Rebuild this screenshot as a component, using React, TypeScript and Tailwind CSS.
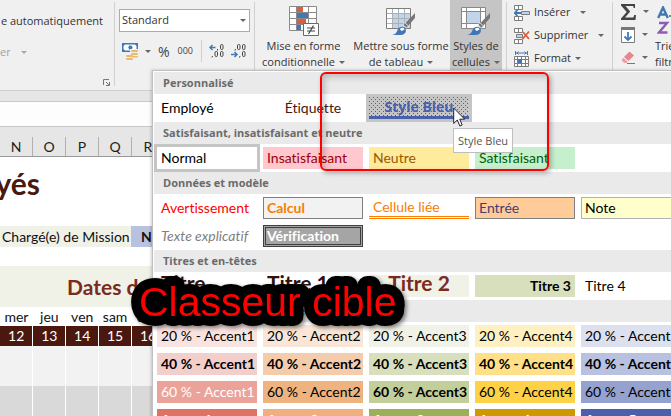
import type { ReactNode } from "react";

const ui = "font-['Open_Sans','Noto_Sans',sans-serif]";
const calibri = "font-['Lato','Open_Sans',sans-serif] [font-variant-ligatures:none]";

function Caret({ className = "text-[#666]" }: { className?: string }) {
  return (
    <svg className={`inline-block shrink-0 ${className}`} width="6" height="3" viewBox="0 0 6 3" aria-hidden="true">
      <path d="M0 0h6L3 3z" fill="currentColor" />
    </svg>
  );
}

function Divider({ className = "h-[84px]" }: { className?: string }) {
  return <div className={`w-px shrink-0 bg-[#d0d0d0] ${className}`} />;
}

function MoneyIcon() {
  return (
    <svg width="17" height="17" viewBox="0 0 17 17" aria-hidden="true">
      <path d="M0 0h16v9H0z" fill="#3f78b5" />
      <path d="M3 1.5h10L14.500 3v3L13 7.500H3L1.500 6V3z" fill="#fff" />
      <path d="M8 2a3 3 0 0 0 0 5z" fill="#3f78b5" />
      <circle cx="8.500" cy="4.500" r="2" fill="#3f78b5" />
      <path d="M8 6h9v9h-5v2H3v-6h5z" fill="#f0f0f0" />
      <g fill="#e8b96f">
        <rect x="9" y="7" width="7" height="2" rx="1" />
        <rect x="9" y="10" width="7" height="2" rx="1" />
        <rect x="10" y="13" width="6" height="1.500" rx=".7" />
        <rect x="4" y="12" width="7" height="2" rx="1" />
        <rect x="4" y="15" width="7" height="2" rx="1" />
      </g>
    </svg>
  );
}

function DecimalIcon({ more }: { more?: boolean }) {
  const arrow = more ? "M6.500 3.500H1M3.500 1L1 3.500 3.500 6" : "M0 10.500h6M3.500 8L6 10.500 3.500 13";
  return (
    <svg width="15" height="14" viewBox="0 0 15 14" aria-hidden="true" fill="none">
      <path d={arrow} stroke="#3f78b5" strokeWidth="1.500" />
      <g stroke="#444">
        <rect x="11.500" y=".5" width="2.500" height="5" rx="1.200" />
        <path d={more ? "M8.500 5v1.500" : "M4.500 5L4 6.500"} />
        {more ? (
          <>
            <rect x="6" y="7.500" width="2.500" height="5" rx="1.200" />
            <path d="M3.500 12L3 13.500" />
          </>
        ) : (
          <>
            <rect x="6.500" y=".5" width="2.500" height="5" rx="1.200" />
            <path d="M9 12l-.5 1.500" />
          </>
        )}
        <rect x="11.500" y="7.500" width="2.500" height="5" rx="1.200" />
      </g>
    </svg>
  );
}

function ConditionalIcon() {
  return (
    <svg width="30" height="31" viewBox="0 0 30 31" aria-hidden="true">
      <path d="M.5 1.500h27v24H.5z" fill="#fff" />
      <path d="M.5 1.500h27v24H.5zM.5 7.500h27M.5 13.500h27M.5 19.500h27M7.500 1.500v24M19.500 1.500v24" fill="none" stroke="#8a8a8a" />
      <path d="M8 2h6v5H8zM8 14h9v5H8z" fill="#d9603b" />
      <path d="M8 8h11v5H8zM8 20h4v5H8z" fill="#3f78b5" />
      <path d="M14.500 18.500h15v12h-15z" fill="#fff" stroke="#6a6a6a" />
      <path d="M18 23h8M18 26h8M24.500 20.500l-5 8.500" stroke="#444" strokeWidth="1.200" fill="none" />
    </svg>
  );
}

function Brush() {
  return (
    <>
      <path d="M29 6v5l-7 8-3-2.500z" fill="#777" />
      <path d="M18.500 15.500l4 3.500-2 2-3.500-3z" fill="#777" stroke="#f0f0f0" strokeWidth=".8" />
      <path d="M6 28c3-.5 4.500-2 5.500-5 1.500-3.500 6-4.500 8-1.500 1.500 3-1 6.500-4.500 6.500z" fill="#3f78b5" />
      <path d="M14 22c1.500-2 4-1.500 4.500.5-1 1-2 .3-2.500 1.500-1-.2-1.700-.8-2-2z" fill="#fff" />
    </>
  );
}

function TableIcon() {
  return (
    <svg width="30" height="29" viewBox="0 0 30 29" aria-hidden="true">
      <path d="M.5 1.500h24v20H.5z" fill="#fff" />
      <path d="M7 7h18v15H7z" fill="#c1d4e9" />
      <path d="M.5 6.500h24M.5 11.500h24M.5 16.500h24M6.500 1.500v20M12.500 1.500v20M18.500 1.500v20" fill="none" stroke="#a9b0b8" />
      <path d="M.5 1.500h24v20H.5z" fill="none" stroke="#7d7d7d" />
      <Brush />
    </svg>
  );
}

function StylesIcon() {
  return (
    <svg width="30" height="29" viewBox="0 0 30 29" aria-hidden="true">
      <path d="M.5.5h24v21H.5z" fill="#fff" />
      <path d="M6 5h14v11H6z" fill="#c1d4e9" />
      <path d="M.5.5h24v21H.5zM.5 4.500h24M.5 16.500h24M5.500.5v21M19.500.5v21" fill="none" stroke="#888" />
      <Brush />
    </svg>
  );
}

function InsertIcon() {
  return (
    <svg width="16" height="16" viewBox="0 0 16 16" aria-hidden="true" fill="#fff">
      <path d="M.5.5h8v4h-8zM4.500.5v4M.5 11.500h8v4h-8zM4.500 11.500v4" stroke="#7d7d7d" />
      <path d="M7.500 6.500h8v3h-8z" fill="#c1d4e9" stroke="#7d7d7d" />
      <path d="M7 8H1M3.500 5L.7 8l2.800 3" fill="none" stroke="#3f78b5" strokeWidth="1.800" />
    </svg>
  );
}

function DeleteIcon() {
  return (
    <svg width="16" height="16" viewBox="0 0 16 16" aria-hidden="true" fill="#fff">
      <path d="M.5.5h8v4h-8zM4.500.5v4M.5 11.500h8v4h-8zM4.500 11.500v4" stroke="#7d7d7d" />
      <path d="M2.500 6.500h6v3h-6z" fill="#c1d4e9" stroke="#7d7d7d" />
      <path d="M9 4l6 7M15 3.500L8.500 11" fill="none" stroke="#d9603b" strokeWidth="1.800" />
    </svg>
  );
}

function FormatIcon() {
  return (
    <svg width="16" height="16" viewBox="0 0 16 16" aria-hidden="true" fill="none">
      <path d="M1.500 0v4M13.500 0v4M2 2h11M4.500.5L3 2l1.500 1.500M10.500.5L12 2l-1.500 1.500" stroke="#3f78b5" />
      <path d="M.5 5.500h14v10H.5z" fill="#fff" />
      <path d="M.5 5.500h14v10H.5zM.5 8.500h14M.5 12.500h14M3.500 5.500v10M7.500 5.500v10M11.500 5.500v10" stroke="#7d7d7d" />
      <path d="M4 8h4v4H4z" fill="#3f78b5" />
    </svg>
  );
}

function SigmaIcon() {
  return (
    <svg width="15" height="16" viewBox="0 0 15 16" aria-hidden="true">
      <path d="M0 0h14v4h-1.200l-.8-2H4.500l4.700 5.500L4 13.500h8.300l1-2.500H15l-.5 5H0v-1.500L5.700 8 0 1.500z" fill="#444" />
    </svg>
  );
}

function FillIcon() {
  return (
    <svg width="15" height="16" viewBox="0 0 15 16" aria-hidden="true" fill="none">
      <path d="M.5.5h13v15H.5z" fill="#fff" stroke="#7d7d7d" />
      <path d="M0 0h14v3H0z" fill="#777" />
      <path d="M7 5v8M3.500 9.500L7 13l3.500-3.500" stroke="#3f78b5" strokeWidth="1.800" />
    </svg>
  );
}

function EraserIcon() {
  return (
    <svg width="15" height="13" viewBox="0 0 15 13" aria-hidden="true">
      <path d="M8.500.5L13 4.500 7.500 10 3 6z" fill="#e8868f" />
      <path d="M2.300 6.700L6.800 10.700 5.500 12H3L.5 9z" fill="#ec9fa7" />
      <path d="M6 12.500h8" stroke="#777" />
    </svg>
  );
}

function SortIcon() {
  return (
    <svg width="30" height="30" viewBox="0 0 30 30" aria-hidden="true" fill="none" strokeWidth="2.400">
      <path d="M1.200 12L6 1.500 10.800 12M3 8.500h6" stroke="#3f78b5" />
      <path d="M2 17h8l-8 9.500h8.500" stroke="#8d5db5" />
      <path d="M12 10h4" stroke="#666" strokeWidth="1.500" />
    </svg>
  );
}

function BigButton({ icon, first, second, className }: { icon: ReactNode; first: string; second: string; className: string }) {
  return (
    <button type="button" className={`flex h-[71px] shrink-0 flex-col items-center whitespace-nowrap text-[11px] leading-4 text-[#333] ${className}`}>
      <span className="flex h-9 shrink-0 items-end">{icon}</span>
      <span className="mt-0.5">{first}</span>
      <span className="flex items-center gap-1">
        {second}
        <Caret />
      </span>
    </button>
  );
}

function SmallButton({ icon, label, gap = "gap-2.5" }: { icon: ReactNode; label: string; gap?: string }) {
  return (
    <button type="button" className="flex h-[23px] items-center gap-1 text-[11px] text-[#333]">
      {icon}
      <span className={`flex items-center ${gap}`}>
        {label}
        <Caret />
      </span>
    </button>
  );
}

function Ribbon() {
  return (
    <div className={`flex h-[91px] overflow-hidden border-b border-[#d0d0d0] bg-[#f0f0f0] ${ui}`}>
      <div className="flex w-[114px] shrink-0 flex-col items-end pr-1 pt-3 text-[11px]">
        <button type="button" className="mr-[7px] whitespace-nowrap leading-[18px] text-[#333]">e automatiquement</button>
        <button type="button" className="mt-[13px] flex items-center gap-2.5 self-start leading-[18px] text-[#a0a0a0]">
          er <Caret className="text-[#a8a8a8]" />
        </button>
        <button type="button" aria-label="Alignement" className="mt-[18px]">
          <svg width="7" height="7" viewBox="0 0 7 7" aria-hidden="true" fill="none" stroke="#777">
            <path d="M.5 6V.5H6M3 3l3 3M6.500 3v3.500H3" />
          </svg>
        </button>
      </div>
      <Divider className="mt-0.5 h-[84px]" />
      <div className="w-[139px] shrink-0 pl-1 pt-[9px]">
        <div className="grid w-[131px] grid-cols-1 items-center">
          <select aria-label="Format de nombre" className="col-start-1 row-start-1 h-[23px] appearance-none border border-[#ababab] bg-white pl-0.5 text-[11px] text-[#333]">
            <option>Standard</option>
          </select>
          <span className="pointer-events-none col-start-1 row-start-1 mr-1 flex justify-end"><Caret /></span>
        </div>
        <div className="flex h-[38px] items-center pl-[3px] text-[#444]">
          <button type="button" aria-label="Comptabilité" className="flex items-center gap-1.5"><MoneyIcon /><Caret /></button>
          <button type="button" className="ml-[7px] text-[14px]">%</button>
          <button type="button" className="ml-2 text-[9px]">000</button>
          <div className="ml-2 h-[22px] w-px bg-[#d0d0d0]" />
          <button type="button" aria-label="Ajouter une décimale" className="ml-[7px]"><DecimalIcon more /></button>
          <button type="button" aria-label="Réduire les décimales" className="ml-[7px]"><DecimalIcon /></button>
        </div>
      </div>
      <Divider className="mt-0.5 h-[84px]" />
      <BigButton className="w-[97px]" icon={<ConditionalIcon />} first="Mise en forme" second="conditionnelle" />
      <BigButton className="w-[98px]" icon={<TableIcon />} first="Mettre sous forme" second="de tableau" />
      <BigButton className="w-[52px] bg-[#c5c5c5]" icon={<StylesIcon />} first="Styles de" second="cellules" />
      <Divider className="ml-1 mt-0.5 h-[84px]" />
      <div className="w-[105px] shrink-0 pl-[7px] pt-px">
        <SmallButton icon={<InsertIcon />} label="Insérer" />
        <SmallButton icon={<DeleteIcon />} label="Supprimer" />
        <SmallButton icon={<FormatIcon />} label="Format" gap="gap-1" />
      </div>
      <Divider className="mt-0.5 h-[84px]" />
      <div className="flex w-[42px] shrink-0 flex-col pl-2">
        <button type="button" aria-label="Somme" className="flex h-[23px] items-center gap-[7px]"><SigmaIcon /><Caret /></button>
        <button type="button" aria-label="Remplissage" className="flex h-[23px] items-center gap-[6px]"><FillIcon /><Caret /></button>
        <button type="button" aria-label="Effacer" className="flex h-[23px] items-center gap-[6px]"><EraserIcon /><Caret /></button>
      </div>
      <button type="button" className="flex h-[71px] shrink-0 flex-col items-start whitespace-nowrap text-[11px] leading-4 text-[#333]">
        <span className="ml-0.5 flex h-9 items-end"><SortIcon /></span>
        <span className="mt-0.5">Trier et</span>
        <span>filtrer</span>
      </button>
    </div>
  );
}

const columns = ["N", "O", "P", "Q", "R"];
const days = [
  ["mer", "12"],
  ["jeu", "13"],
  ["ven", "14"],
  ["sam", "15"],
  ["dim", "16"],
];

function Sheet() {
  return (
    <div className={`overflow-hidden ${calibri}`}>
      <div className="h-2.5 bg-[#e6e6e6]" />
      <div className="h-[26px] border-y border-[#c8c8c8] bg-[#fdfdfd]" />
      <div className="flex h-[30px] items-end border-b border-[#999] bg-[#e6e6e6] text-[14px] text-[#222]">
        {columns.map((c) => (
          <div key={c} className="h-[19px] w-[33px] border-r border-[#b0b0b0] text-center leading-[20px]">{c}</div>
        ))}
      </div>
      <div className="flex h-[69px] w-10 justify-end pt-2 text-[30px] font-bold leading-9 text-[#4a180f]">yés</div>
      <div className="flex h-[21px] whitespace-nowrap text-[14px] leading-[21px] text-[#111]">
        <div className="w-[131px] shrink-0 bg-[#f0f2e7] pl-0.5">Chargé(e) de Mission</div>
        <div className="grow bg-[#b8c1df] pl-2.5 font-bold">N.</div>
      </div>
      <div className="mt-[19px] h-[41px] bg-[#f0f2e7] pl-[67px] text-[21px] font-bold leading-[41px] text-[#7b2a20]">Dates du</div>
      <table className="w-[165px] table-fixed border-collapse text-center text-[14px]">
        <thead>
          <tr className="h-[19px] leading-[19px] text-[#111]">
            {days.map(([d]) => <th key={d} className="p-0 font-normal">{d}</th>)}
          </tr>
        </thead>
        <tbody>
          <tr className="h-5 bg-[#4a180f] leading-5 text-white">
            {days.map(([d, n]) => <td key={d} className="border-r border-white p-0">{n}</td>)}
          </tr>
          <tr className="h-10 bg-[#f2f2f2]">
            {days.map(([d]) => <td key={d} className="border-r border-white p-0" />)}
          </tr>
          <tr className="h-10 bg-[#d9d9d9]">
            {days.map(([d]) => <td key={d} className="border-r border-white p-0" />)}
          </tr>
        </tbody>
      </table>
    </div>
  );
}

function Heading({ children }: { children: ReactNode }) {
  return <h2 className={`h-[22px] bg-[#eaeaea] pl-[9px] text-[11px] font-bold leading-[22px] text-[#6a6a6a] ${ui}`}>{children}</h2>;
}

function Row({ children }: { children: ReactNode }) {
  return <div className="flex h-7">{children}</div>;
}

function Style({ children, className = "", frame = "", pad = "px-1", size = "text-[14px] leading-[20px]" }: { children: ReactNode; className?: string; frame?: string; pad?: string; size?: string }) {
  return (
    <button type="button" className={`h-7 w-[106px] shrink-0 p-[3px] ${frame}`}>
      <span className={`relative flex h-[22px] items-center overflow-hidden whitespace-nowrap ${pad} ${size} ${className}`}>{children}</span>
    </button>
  );
}

function Title({ children }: { children: ReactNode }) {
  return <span className="self-start text-[21px] leading-4">{children}</span>;
}

const accents = [
  { label: "20 % - Accent", cells: ["bg-[#f9e3e1]", "bg-[#fae6d7]", "bg-[#f0f2e7]", "bg-[#fff0c2]", "bg-[#dce0ef]"] },
  { label: "40 % - Accent", cells: ["bg-[#f3cfcb] font-bold", "bg-[#f4ccac] font-bold", "bg-[#d7dfbc] font-bold", "bg-[#ffe088] font-bold", "bg-[#b8c1df] font-bold"] },
  { label: "60 % - Accent", cells: ["bg-[#eaa299] text-white", "bg-[#efb380]", "bg-[#c3cf9b] font-bold", "bg-[#ffd147]", "bg-[#95a2cf]"] },
  { label: "Accent", cells: ["bg-[#de7265] font-bold text-white", "bg-[#efb080] font-bold text-white", "bg-[#9bb05b] font-bold text-white", "bg-[#cc9900] font-bold text-white", "bg-[#4b60ab] font-bold text-white"] },
];

function Gallery() {
  return (
    <div className={`absolute left-[152px] right-0 top-[70px] overflow-hidden border-l border-t border-[#c0c0c0] bg-white pl-px pt-px text-black shadow-[-1px_0_3px_rgba(0,0,0,0.2)] ${calibri}`}>
      <Heading>Personnalisé</Heading>
      <Row>
        <Style>Employé</Style>
        <Style className="justify-center text-[#4a180f]">Étiquette</Style>
        <Style frame="bg-[#c5c5c5]" size="text-[14px] leading-[18px]" className={`justify-center border-b-[3px] border-[#4b60ab] font-bold text-[#4b60ab] ${ui}`}>
          <svg className="absolute inset-0" width="100" height="19" aria-hidden="true">
            <pattern id="dots" width="4" height="4" patternUnits="userSpaceOnUse">
              <path d="M0 0h1v1H0zM2 2h1v1H2z" fill="#4b60ab" />
            </pattern>
            <rect width="100" height="19" fill="url(#dots)" />
          </svg>
          <span className="relative">Style Bleu</span>
        </Style>
      </Row>
      <Heading>Satisfaisant, insatisfaisant et neutre</Heading>
      <Row>
        <Style frame="outline-[3px] -outline-offset-[3px] outline-[#c5c5c5] outline-solid">Normal</Style>
        <Style className="bg-[#ffc7ce] text-[#9c0006]">Insatisfaisant</Style>
        <Style className="bg-[#ffeb9c] text-[#9c5700]">Neutre</Style>
        <Style className="bg-[#c6efce] text-[#006100]">Satisfaisant</Style>
      </Row>
      <Heading>Données et modèle</Heading>
      <Row>
        <Style className="text-[#ff0000]">Avertissement</Style>
        <Style pad="px-[3px]" className="border border-[#7f7f7f] bg-[#f2f2f2] font-bold text-[#fa7d00]">Calcul</Style>
        <Style className="border-b-[3px] border-double border-[#ff8001] text-[#fa7d00]">Cellule liée</Style>
        <Style pad="px-[3px]" className="border border-[#7f7f7f] bg-[#ffcc99] text-[#3f3f76]">Entrée</Style>
        <Style pad="px-[3px]" className="border border-[#b2b2b2] bg-[#ffffcc]">Note</Style>
      </Row>
      <Row>
        <Style className="italic text-[#7f7f7f]">Texte explicatif</Style>
        <Style pad="px-px" className="border-[3px] border-double border-[#3f3f3f] bg-[#a5a5a5] font-bold text-white">Vérification</Style>
      </Row>
      <Heading>Titres et en-têtes</Heading>
      <Row>
        <Style className="font-bold text-[#330f0a]"><Title>Titre</Title></Style>
        <Style className="font-bold text-[#330f0a]"><Title>Titre 1</Title></Style>
        <Style className="justify-center bg-[#f0f2e7] font-bold text-[#7b2a20]"><Title>Titre 2</Title></Style>
        <Style className="justify-end bg-[#d7dfbc] font-bold">Titre 3</Style>
        <Style>Titre 4</Style>
      </Row>
      <Heading>Styles de cellules avec thème</Heading>
      {accents.map(({ label, cells }) => (
        <Row key={label}>
          {cells.map((cell, i) => (
            <Style key={cell} className={cell}>{`${label}${i + 1}`}</Style>
          ))}
        </Row>
      ))}
    </div>
  );
}

export default function App() {
  return (
    <main className="relative h-screen w-full overflow-hidden bg-white">
      <Ribbon />
      <Sheet />
      <Gallery />
      <div className="pointer-events-none absolute left-[320px] top-[72px] h-[99px] w-[229px] rounded-md border-2 border-[#ff0000] shadow-[2px_2px_5px_rgba(0,0,0,0.3),inset_3px_3px_6px_rgba(0,0,0,0.2)]" />
      <div role="tooltip" className={`absolute left-[453px] top-[128px] border border-[#bebebe] bg-white px-1 text-[11px] leading-[23px] text-[#555] ${ui}`}>Style Bleu</div>
      <svg className="absolute left-[453px] top-[107px]" width="13" height="20" viewBox="0 0 13 20" aria-hidden="true">
        <path d="M.7 1v15.500l3.600-3.500 2.500 6 2.400-1-2.500-5.800h5z" fill="#fff" stroke="#223" />
      </svg>
      <svg className="absolute left-[125px] top-[270px] overflow-visible drop-shadow-[2px_2px_2px_rgba(0,0,0,0.5)]" width="285" height="62">
        <text x="14" y="46" fontSize="41" fill="#ff0000" stroke="#000" strokeWidth="20" strokeLinejoin="round" paintOrder="stroke" className="font-['Liberation_Sans',Arial,sans-serif]">Classeur cible</text>
      </svg>
    </main>
  );
}
